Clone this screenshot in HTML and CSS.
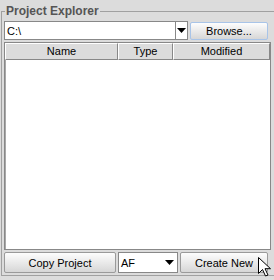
FILE: index.html
```html
<!DOCTYPE html>
<html lang="en">
<head>
    <meta charset="UTF-8">
    <title>Project Explorer</title>
    <link rel="stylesheet" href="styles.css">
</head>
<body>
    <fieldset class="group">
        <legend>Project Explorer</legend>
        <div class="toprow">
            <div class="combo path">
                <span class="value">C:\</span>
                <span class="arrow"><svg width="9" height="5" viewBox="0 0 9 5"><path d="M0 0h9L4.5 5z" fill="#000"/></svg></span>
            </div>
            <button class="btn browse">Browse...</button>
        </div>
        <div class="table">
            <div class="head">
                <div class="col name">Name</div>
                <div class="col type">Type</div>
                <div class="col modified">Modified</div>
            </div>
            <div class="rows"></div>
        </div>
        <div class="bottomrow">
            <button class="btn copy">Copy Project</button>
            <div class="combo kind">
                <span class="value">AF</span>
                <span class="arrow"><svg width="9" height="5" viewBox="0 0 9 5"><path d="M0 0h9L4.5 5z" fill="#000"/></svg></span>
            </div>
            <button class="btn create">Create New</button>
        </div>
    </fieldset>
    <svg class="cursor" width="13" height="20" viewBox="0 0 13 20">
        <path d="M0.5 0.5v16l4-4 3 6.5 2.5-1-3-6.3h5.5z" fill="#fff" stroke="#000" stroke-width="1"/>
    </svg>
</body>
</html>
```

FILE: styles.css
```css
body {
    margin: 0;
    width: 274px;
    height: 280px;
    background: #dcdcdc;
    font-family: "Liberation Sans", Arial, sans-serif;
    font-size: 11px;
    color: #000;
    position: relative;
    overflow: hidden;
}
.group {
    margin: 4px 1px 0 1px;
    padding: 3px 3px 2px 2px;
    border: 1px solid #a0a0a0;
    height: 272px;
    box-sizing: border-box;
    display: flex;
    flex-direction: column;
    gap: 2px;
}
.group legend {
    padding: 0 1px;
    margin-left: 1px;
    font-weight: bold;
    font-size: 12px;
    color: #555;
}
.toprow {
    display: flex;
    gap: 2px;
    align-items: flex-start;
}
.combo {
    display: flex;
    align-items: center;
    background: #fff;
    border: 1px solid #888;
    box-sizing: border-box;
}
.combo .value {
    flex: 1;
    padding-left: 2px;
}
.combo .arrow {
    width: 11px;
    height: 100%;
    border-left: 1px solid #888;
    display: flex;
    align-items: center;
    justify-content: center;
}
.path {
    width: 184px;
    height: 19px;
}
.kind {
    width: 60px;
    height: 21px;
}
.kind .arrow {
    border-left: none;
    width: 16px;
}
.btn {
    font-family: "Liberation Sans", Arial, sans-serif;
    font-size: 11px;
    background: linear-gradient(#fdfdfd, #e6e6e6 60%, #d6d6d6);
    border: 1px solid #9a9a9a;
    border-radius: 2px;
    padding: 0;
    box-sizing: border-box;
    color: #000;
}
.browse {
    width: 78px;
    height: 18px;
    margin-top: 1px;
    border-color: #a8c4e8;
}
.table {
    flex: 1;
    width: 265px;
    border: 1px solid #888;
    box-shadow: inset 1px 1px 0 #a8a8a8;
    background: #fff;
    display: flex;
    flex-direction: column;
}
.head {
    display: flex;
    height: 17px;
}
.col {
    box-sizing: border-box;
    background: #dcdcdc;
    border: 1px solid #888;
    border-top-color: #fff;
    border-left-color: #fff;
    text-align: center;
    line-height: 15px;
}
.name { width: 113px; }
.type { width: 55px; }
.modified { flex: 1; }
.rows { flex: 1; }
.bottomrow {
    display: flex;
    gap: 2px;
    height: 21px;
}
.copy { width: 112px; }
.create { width: 88px; }
.cursor {
    position: absolute;
    left: 258px;
    top: 257px;
}
```
